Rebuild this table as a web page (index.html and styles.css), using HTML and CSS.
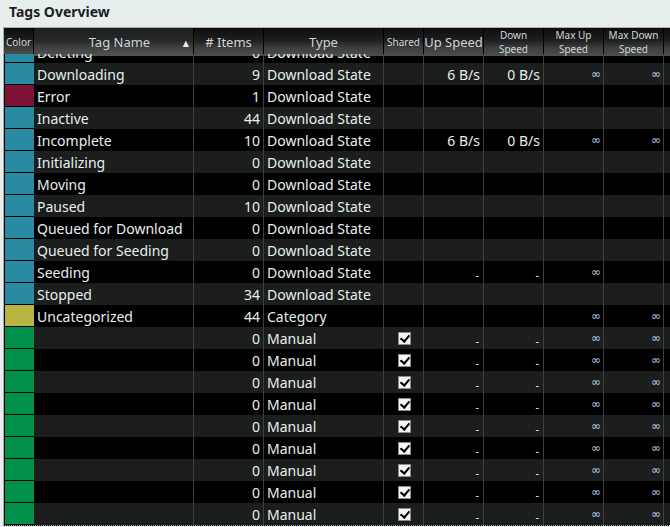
FILE: index.html
```html
<!DOCTYPE html>
<html>
<head>
<meta charset="utf-8">
<link rel="stylesheet" href="styles.css">
</head>
<body>
<div class="title">Tags Overview</div>
<div class="table">
  <div class="row head">
    <div class="h h-color">Color</div>
    <div class="h h-name sorted"><span>Tag Name</span><span class="arrow">▲</span></div>
    <div class="h">#&nbsp;Items</div>
    <div class="h">Type</div>
    <div class="h small">Shared</div>
    <div class="h">Up Speed</div>
    <div class="h small two">Down<br>Speed</div>
    <div class="h small two">Max Up<br>Speed</div>
    <div class="h small two">Max Down<br>Speed</div>
    <div class="h last"></div>
  </div>
  <div class="viewport">
    <div class="rows">
      <div class="row"><div class="c color"><i class="sw teal"></i></div><div class="c name">Deleting</div><div class="c num">0</div><div class="c type">Download State</div><div class="c"></div><div class="c"></div><div class="c"></div><div class="c"></div><div class="c"></div><div class="c last"></div></div>
      <div class="row alt"><div class="c color"><i class="sw teal"></i></div><div class="c name">Downloading</div><div class="c num">9</div><div class="c type">Download State</div><div class="c"></div><div class="c num">6 B/s</div><div class="c num">0 B/s</div><div class="c num inf">∞</div><div class="c num inf">∞</div><div class="c last"></div></div>
      <div class="row"><div class="c color"><i class="sw red"></i></div><div class="c name">Error</div><div class="c num">1</div><div class="c type">Download State</div><div class="c"></div><div class="c"></div><div class="c"></div><div class="c"></div><div class="c"></div><div class="c last"></div></div>
      <div class="row alt"><div class="c color"><i class="sw teal"></i></div><div class="c name">Inactive</div><div class="c num">44</div><div class="c type">Download State</div><div class="c"></div><div class="c"></div><div class="c"></div><div class="c"></div><div class="c"></div><div class="c last"></div></div>
      <div class="row"><div class="c color"><i class="sw teal"></i></div><div class="c name">Incomplete</div><div class="c num">10</div><div class="c type">Download State</div><div class="c"></div><div class="c num">6 B/s</div><div class="c num">0 B/s</div><div class="c num inf">∞</div><div class="c num inf">∞</div><div class="c last"></div></div>
      <div class="row alt"><div class="c color"><i class="sw teal"></i></div><div class="c name">Initializing</div><div class="c num">0</div><div class="c type">Download State</div><div class="c"></div><div class="c"></div><div class="c"></div><div class="c"></div><div class="c"></div><div class="c last"></div></div>
      <div class="row"><div class="c color"><i class="sw teal"></i></div><div class="c name">Moving</div><div class="c num">0</div><div class="c type">Download State</div><div class="c"></div><div class="c"></div><div class="c"></div><div class="c"></div><div class="c"></div><div class="c last"></div></div>
      <div class="row alt"><div class="c color"><i class="sw teal"></i></div><div class="c name">Paused</div><div class="c num">10</div><div class="c type">Download State</div><div class="c"></div><div class="c"></div><div class="c"></div><div class="c"></div><div class="c"></div><div class="c last"></div></div>
      <div class="row"><div class="c color"><i class="sw teal"></i></div><div class="c name">Queued for Download</div><div class="c num">0</div><div class="c type">Download State</div><div class="c"></div><div class="c"></div><div class="c"></div><div class="c"></div><div class="c"></div><div class="c last"></div></div>
      <div class="row alt"><div class="c color"><i class="sw teal"></i></div><div class="c name">Queued for Seeding</div><div class="c num">0</div><div class="c type">Download State</div><div class="c"></div><div class="c"></div><div class="c"></div><div class="c"></div><div class="c"></div><div class="c last"></div></div>
      <div class="row"><div class="c color"><i class="sw teal"></i></div><div class="c name">Seeding</div><div class="c num">0</div><div class="c type">Download State</div><div class="c"></div><div class="c num dash">-</div><div class="c num dash">-</div><div class="c num inf">∞</div><div class="c"></div><div class="c last"></div></div>
      <div class="row alt"><div class="c color"><i class="sw teal"></i></div><div class="c name">Stopped</div><div class="c num">34</div><div class="c type">Download State</div><div class="c"></div><div class="c"></div><div class="c"></div><div class="c"></div><div class="c"></div><div class="c last"></div></div>
      <div class="row"><div class="c color"><i class="sw olive"></i></div><div class="c name">Uncategorized</div><div class="c num">44</div><div class="c type">Category</div><div class="c"></div><div class="c"></div><div class="c"></div><div class="c num inf">∞</div><div class="c num inf">∞</div><div class="c last"></div></div>
      <div class="row alt"><div class="c color"><i class="sw green"></i></div><div class="c name"></div><div class="c num">0</div><div class="c type">Manual</div><div class="c chk"><span class="box"></span></div><div class="c num dash">-</div><div class="c num dash">-</div><div class="c num inf">∞</div><div class="c num inf">∞</div><div class="c last"></div></div>
      <div class="row"><div class="c color"><i class="sw green"></i></div><div class="c name"></div><div class="c num">0</div><div class="c type">Manual</div><div class="c chk"><span class="box"></span></div><div class="c num dash">-</div><div class="c num dash">-</div><div class="c num inf">∞</div><div class="c num inf">∞</div><div class="c last"></div></div>
      <div class="row alt"><div class="c color"><i class="sw green"></i></div><div class="c name"></div><div class="c num">0</div><div class="c type">Manual</div><div class="c chk"><span class="box"></span></div><div class="c num dash">-</div><div class="c num dash">-</div><div class="c num inf">∞</div><div class="c num inf">∞</div><div class="c last"></div></div>
      <div class="row"><div class="c color"><i class="sw green"></i></div><div class="c name"></div><div class="c num">0</div><div class="c type">Manual</div><div class="c chk"><span class="box"></span></div><div class="c num dash">-</div><div class="c num dash">-</div><div class="c num inf">∞</div><div class="c num inf">∞</div><div class="c last"></div></div>
      <div class="row alt"><div class="c color"><i class="sw green"></i></div><div class="c name"></div><div class="c num">0</div><div class="c type">Manual</div><div class="c chk"><span class="box"></span></div><div class="c num dash">-</div><div class="c num dash">-</div><div class="c num inf">∞</div><div class="c num inf">∞</div><div class="c last"></div></div>
      <div class="row"><div class="c color"><i class="sw green"></i></div><div class="c name"></div><div class="c num">0</div><div class="c type">Manual</div><div class="c chk"><span class="box"></span></div><div class="c num dash">-</div><div class="c num dash">-</div><div class="c num inf">∞</div><div class="c num inf">∞</div><div class="c last"></div></div>
      <div class="row alt"><div class="c color"><i class="sw green"></i></div><div class="c name"></div><div class="c num">0</div><div class="c type">Manual</div><div class="c chk"><span class="box"></span></div><div class="c num dash">-</div><div class="c num dash">-</div><div class="c num inf">∞</div><div class="c num inf">∞</div><div class="c last"></div></div>
      <div class="row"><div class="c color"><i class="sw green"></i></div><div class="c name"></div><div class="c num">0</div><div class="c type">Manual</div><div class="c chk"><span class="box"></span></div><div class="c num dash">-</div><div class="c num dash">-</div><div class="c num inf">∞</div><div class="c num inf">∞</div><div class="c last"></div></div>
      <div class="row alt"><div class="c color"><i class="sw green"></i></div><div class="c name"></div><div class="c num">0</div><div class="c type">Manual</div><div class="c chk"><span class="box"></span></div><div class="c num dash">-</div><div class="c num dash">-</div><div class="c num inf">∞</div><div class="c num inf">∞</div><div class="c last"></div></div>
    </div>
  </div>
</div>
</body>
</html>
```
FILE: styles.css
```css
html, body {
  margin: 0;
  padding: 0;
  background: #e7eeee;
  overflow: hidden;
}
body {
  font-family: "Noto Sans", "DejaVu Sans", sans-serif;
  width: 670px;
  height: 527px;
}
.title {
  height: 27px;
  box-sizing: border-box;
  padding: 3px 0 0 9px;
  font-size: 14px;
  font-weight: bold;
  color: #1b1f1f;
  line-height: 18px;
}
.table {
  margin-left: 3px;
  border-top: 1px solid #a9b0b0;
  border-left: 1px solid #a9b0b0;
  border-bottom: 1px dotted #9aa0a0;
  background: #000;
}
.row {
  display: grid;
  grid-template-columns: 30px 160px 70px 120px 40px 60px 60px 60px 60px 6px;
  height: 22px;
  background: #000;
}
.row.alt {
  background: #1b1e1c;
}
.head {
  height: 26px;
}
.h {
  box-sizing: border-box;
  border-right: 1px solid #000;
  background: linear-gradient(#0d0d0d 0%, #1f1f1f 45%, #3c3d3d 70%, #4d4e4e 100%);
  color: #cdd6da;
  font-size: 13px;
  display: flex;
  align-items: center;
  justify-content: center;
  text-align: center;
  white-space: nowrap;
}
.h-color {
  font-size: 10px;
  justify-content: flex-start;
  padding-left: 2px;
}
.sorted {
  background: linear-gradient(#1e1f1f 0%, #262727 45%, #404141 70%, #525353 100%);
  justify-content: space-between;
  padding: 0 4px 0 22px;
  font-size: 13px;
}
.sorted span:first-child {
  flex: 1;
  text-align: center;
}
.arrow {
  font-size: 8px;
  color: #e8eeee;
}
.small {
  font-size: 10px;
}
.two {
  line-height: 14px;
  padding-top: 0;
}
.h.last {
  border-right: none;
}
.viewport {
  height: 471px;
  overflow: hidden;
}
.rows {
  margin-top: -13px;
}
.c {
  box-sizing: border-box;
  border-right: 1px solid #3d403f;
  color: #e6eef0;
  font-size: 14px;
  line-height: 24px;
  white-space: nowrap;
  overflow: hidden;
}
.c.last {
  border-right: none;
}
.c.color {
  border-right: none;
  background: #000;
  display: flex;
}
.sw {
  display: block;
  width: 29px;
  height: 21px;
  margin-left: 1px;
}
.sw.teal { background: #2a8aa1; }
.sw.red { background: #7e1236; }
.sw.olive { background: #bab543; }
.sw.green { background: #00904a; }
.name {
  padding-left: 3px;
}
.num {
  text-align: right;
  padding-right: 3px;
}
.type {
  padding-left: 3px;
}
.inf {
  font-size: 12px;
  color: #b4cfe4;
  padding-right: 2px;
  line-height: 22px;
}
.dash {
  font-size: 11px;
  padding-right: 4px;
  line-height: 28px;
}
.chk {
  display: flex;
  align-items: center;
  justify-content: center;
}
.box {
  position: relative;
  width: 13px;
  height: 13px;
  box-sizing: border-box;
  border: 1px solid #8a8c8c;
  background: #f4f4f4;
  margin-left: 1px;
}
.box::after {
  content: "";
  position: absolute;
  left: 3px;
  top: 0px;
  width: 4px;
  height: 7px;
  border-right: 2px solid #000;
  border-bottom: 2px solid #000;
  transform: rotate(40deg);
}
```
